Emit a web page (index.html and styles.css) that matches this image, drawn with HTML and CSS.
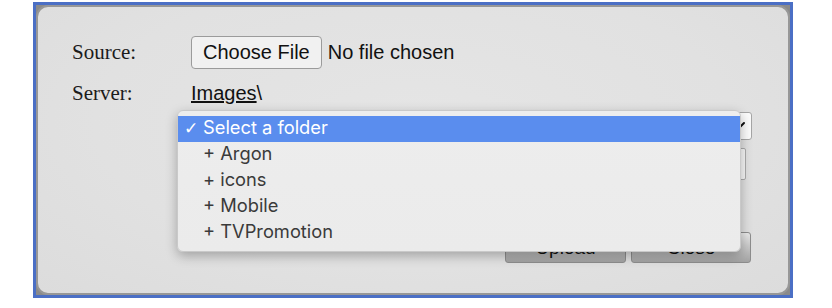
FILE: index.html
```html
<!DOCTYPE html>
<html>
<head>
<meta charset="utf-8">
<link rel="stylesheet" href="styles.css">
</head>
<body>
<div class="frame">
  <div class="dialog">
    <div class="row row-source">
      <span class="label">Source:</span>
      <button class="choose">Choose File</button>
      <span class="nofile">No file chosen</span>
    </div>
    <div class="row row-server">
      <span class="label">Server:</span>
      <span class="path"><span class="u">Images</span>\</span>
    </div>
    <div class="select">
      <svg class="arrow" width="12" height="10" viewBox="0 0 12 10">
        <path d="M2 3 L6 7 L10 3" fill="none" stroke="#111" stroke-width="2" stroke-linecap="round" stroke-linejoin="round"/>
      </svg>
    </div>
    <div class="textbox"></div>
    <div class="actions">
      <button class="btn btn-upload">Upload</button>
      <button class="btn btn-close">Close</button>
    </div>
    <ul class="popup">
      <li class="opt selected"><span class="check">✓</span>Select a folder</li>
      <li class="opt"><span class="check"></span>+ Argon</li>
      <li class="opt"><span class="check"></span>+ icons</li>
      <li class="opt"><span class="check"></span>+ Mobile</li>
      <li class="opt"><span class="check"></span>+ TVPromotion</li>
    </ul>
  </div>
</div>
</body>
</html>
```

FILE: styles.css
```css
html, body {
  margin: 0;
  padding: 0;
  background: #ffffff;
}

.frame {
  margin: 2px 0 0 33px;
  width: 760px;
  height: 296px;
  box-sizing: border-box;
  border: 3px solid #4b6fc5;
  background: #8a8a8a;
}

.dialog {
  position: relative;
  height: 100%;
  box-sizing: border-box;
  border: 2px solid #979797;
  border-radius: 12px;
  background: radial-gradient(ellipse at 50% 40%, #e5e5e5 0%, #e1e1e1 60%, #dcdcdc 100%);
  padding: 29px 36px 0 34px;
}

.row {
  display: flex;
  align-items: baseline;
}

.label {
  width: 119px;
  flex: none;
  font-family: "Liberation Serif", "Times New Roman", serif;
  font-size: 21px;
  color: #1b1b1b;
}

.row-source {
  height: 33px;
}

.choose {
  height: 33px;
  box-sizing: border-box;
  margin: 0;
  padding: 0 11px;
  border: 1px solid #9b9b9b;
  border-radius: 4px;
  background: #f1f1f1;
  font-family: "Liberation Sans", Arial, sans-serif;
  font-size: 20px;
  color: #111;
}

.nofile {
  margin-left: 6px;
  font-family: "Liberation Sans", Arial, sans-serif;
  font-size: 20px;
  color: #111;
}

.row-server {
  margin-top: 12px;
  height: 24px;
}

.path {
  font-family: "Liberation Sans", Arial, sans-serif;
  font-size: 20px;
  line-height: 24px;
  color: #111;
}

.path .u {
  text-decoration: underline;
  text-decoration-thickness: 1.5px;
}

.select {
  margin: 7px 0 0 119px;
  width: 561px;
  height: 28px;
  box-sizing: border-box;
  border: 1px solid #a6a6a6;
  border-radius: 3px;
  background: #fbfbfb;
  display: flex;
  justify-content: flex-end;
  align-items: center;
  padding-right: 5px;
}

.arrow {
  display: block;
  margin-top: -3px;
}

.textbox {
  margin: 8px 0 0 119px;
  width: 555px;
  height: 32px;
  box-sizing: border-box;
  border: 1px solid #ababab;
  border-radius: 2px;
  background: #f6f6f6;
}

.actions {
  margin-top: 52px;
  display: flex;
  justify-content: flex-end;
  gap: 5px;
  padding-right: 1px;
}

.btn {
  height: 31px;
  box-sizing: border-box;
  margin: 0;
  border: 1px solid #8d8d8d;
  border-radius: 3px;
  background: linear-gradient(#e8e8e8, #a3a3a3);
  font-family: "Liberation Sans", Arial, sans-serif;
  font-size: 19px;
  color: #111;
}

.btn-upload {
  width: 121px;
}

.btn-close {
  width: 120px;
}

.popup {
  position: absolute;
  left: 139px;
  top: 103px;
  width: 564px;
  height: 142px;
  box-sizing: border-box;
  margin: 0;
  padding: 5px 0 7px 0;
  list-style: none;
  background: linear-gradient(#ededed, #ebebeb);
  border: 1px solid #c9c9c9;
  border-radius: 6px;
  box-shadow: 0 4px 12px rgba(0, 0, 0, 0.28);
}

.opt {
  display: flex;
  align-items: baseline;
  height: 26px;
  box-sizing: border-box;
  padding: 0 0 4px 6px;
  line-height: 22px;
  font-family: Inter, "Liberation Sans", sans-serif;
  font-size: 18.3px;
  color: #3a3a3a;
}

.opt.selected {
  background: #5a8dee;
  color: #ffffff;
}

.check {
  width: 19px;
  flex: none;
  font-family: "DejaVu Sans", sans-serif;
  font-size: 17px;
}
```
